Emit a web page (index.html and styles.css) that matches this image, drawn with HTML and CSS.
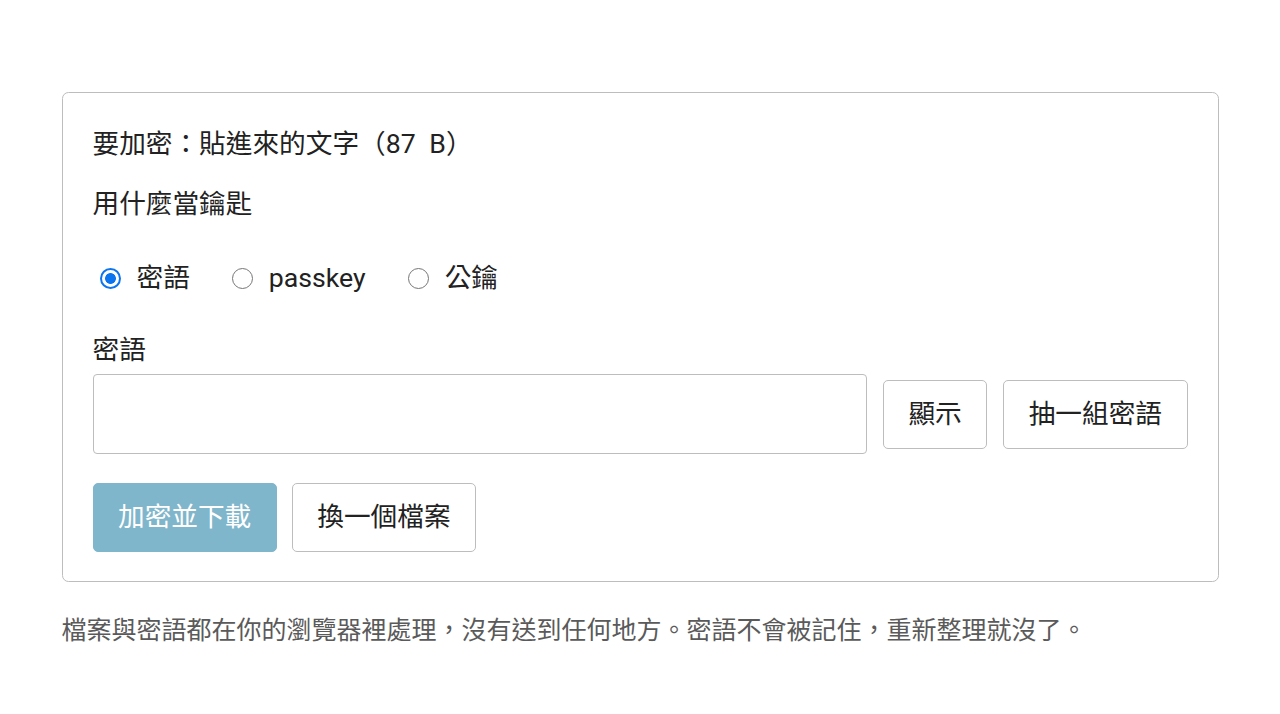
FILE: index.html
```html
<!DOCTYPE html>
<html lang="zh-Hant">
<head>
<meta charset="utf-8">
<title>加密</title>
<link rel="stylesheet" href="styles.css">
</head>
<body>
<main class="page">
  <section class="card">
    <p class="title">要加密：貼進來的文字（87&ensp;B）</p>
    <div class="keys">
      <p class="keys-legend">用什麼當鑰匙</p>
      <div class="radio-row">
        <label class="radio"><span class="dot checked"></span><span class="radio-text">密語</span></label>
        <label class="radio"><span class="dot"></span><span class="radio-text">passkey</span></label>
        <label class="radio"><span class="dot"></span><span class="radio-text">公鑰</span></label>
      </div>
    </div>
    <p class="field-label">密語</p>
    <div class="pw-row">
      <div class="pw-input"></div>
      <button class="btn">顯示</button>
      <button class="btn">抽一組密語</button>
    </div>
    <div class="actions">
      <button class="btn primary">加密並下載</button>
      <button class="btn">換一個檔案</button>
    </div>
  </section>
  <p class="note">檔案與密語都在你的瀏覽器裡處理，沒有送到任何地方。密語不會被記住，重新整理就沒了。</p>
</main>
</body>
</html>
```
FILE: styles.css
```css
* { box-sizing: border-box; }
html, body { margin: 0; padding: 0; background: #fff; }
body {
  font-family: Roboto, "Noto Sans CJK TC", sans-serif;
  color: #222;
  font-size: 26.67px;
}
.page {
  width: 1157px;
  margin: 92px auto 0;
}
.card {
  border: 1.67px solid #bdbdbd;
  border-radius: 6.5px;
  padding: 32px 30px 29px 30px;
}
p { margin: 0; }
.title {
  line-height: 38.6px;
}
.keys-legend {
  margin-top: 21px;
  line-height: 38.6px;
}
.radio-row {
  display: flex;
  align-items: center;
  height: 38.6px;
  margin-top: 36px;
  padding-left: 7px;
  gap: 42px;
}
.radio {
  display: flex;
  align-items: center;
  gap: 16px;
}
.dot {
  width: 21px;
  height: 21px;
  border-radius: 50%;
  border: 1.6px solid #767676;
  background: #fff;
  flex: none;
}
.dot.checked {
  border: 2px solid #0b75f0;
  background: radial-gradient(circle, #0b75f0 0 5px, #fff 5.8px);
}
.radio-text { line-height: 38.6px; }
.field-label {
  margin-top: 33.5px;
  line-height: 38.6px;
}
.pw-row {
  display: flex;
  align-items: center;
  gap: 16px;
  margin-top: 4.5px;
}
.pw-input {
  flex: 1;
  height: 80px;
  border: 1.67px solid #bdbdbd;
  border-radius: 4px;
  background: #fff;
}
.btn {
  font: inherit;
  color: #222;
  background: #fff;
  border: 1.67px solid #bdbdbd;
  border-radius: 5px;
  height: 69px;
  padding: 0 24.5px;
  line-height: 1;
  white-space: nowrap;
}
.actions {
  display: flex;
  gap: 15px;
  margin-top: 28.5px;
}
.btn.primary {
  background: #7fb6cb;
  border-color: #7fb6cb;
  color: #fff;
}
.note {
  margin-top: 31px;
  font-size: 25px;
  line-height: 36px;
  color: #5a5a5a;
}
```
